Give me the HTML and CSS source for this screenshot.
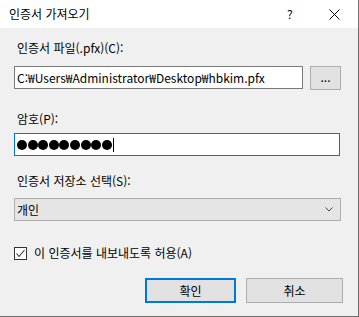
FILE: index.html
```html
<!DOCTYPE html>
<html lang="ko">
<head>
  <meta charset="UTF-8" />
  <title>인증서 가져오기</title>
  <link rel="stylesheet" href="styles.css">
</head>
<body>
  <div class="dialog">
    <!-- 제목 표시줄 -->
    <div class="titlebar">
      <span class="title">인증서 가져오기</span>
      <span class="help">?</span>
      <span class="close">
        <svg width="11" height="11" viewBox="0 0 11 11"><path d="M0.5 0.5 L10.5 10.5 M10.5 0.5 L0.5 10.5" stroke="#000" stroke-width="1" fill="none"/></svg>
      </span>
    </div>

    <div class="content">
      <div class="label first">인증서 파일(.pfx)(C):</div>
      <div class="file-row">
        <div class="field path">C:₩Users₩Administrator₩Desktop₩hbkim.pfx</div>
        <div class="browse">...</div>
      </div>

      <div class="label pw-label">암호(P):</div>
      <div class="field password">
        <span class="dot"></span><span class="dot"></span><span class="dot"></span>
        <span class="dot"></span><span class="dot"></span><span class="dot"></span>
        <span class="dot"></span><span class="dot"></span><span class="dot"></span>
        <span class="caret"></span>
      </div>

      <div class="label store-label">인증서 저장소 선택(S):</div>
      <div class="select">
        <span>개인</span>
        <svg width="8" height="5" viewBox="0 0 8 5"><path d="M0.5 0.5 L4 4 L7.5 0.5" stroke="#444" stroke-width="1" fill="none"/></svg>
      </div>

      <div class="check-row">
        <span class="checkbox">
          <svg width="11" height="11" viewBox="0 0 11 11"><path d="M1.5 5.5 L4 8.5 L9.5 2" stroke="#333" stroke-width="1.1" fill="none"/></svg>
        </span>
        <span>이 인증서를 내보내도록 허용(A)</span>
      </div>

      <div class="buttons">
        <div class="btn ok">확인</div>
        <div class="btn cancel">취소</div>
      </div>
    </div>
  </div>
</body>
</html>
```

FILE: styles.css
```css
body {
  margin: 0;
  font-family: "Noto Sans CJK KR", "Noto Sans", sans-serif;
  font-size: 12px;
  color: #000;
  background: #fff;
}
.dialog {
  width: 358px;
  height: 316px;
  background: #f0f0f0;
  border-right: 1px solid #6e6e6e;
  border-bottom: 1px solid #6e6e6e;
}
.titlebar {
  height: 28px;
  background: #fff;
  display: flex;
  align-items: center;
}
.title {
  margin-left: 9px;
  line-height: 16px;
}
.help {
  margin-left: auto;
  width: 12px;
  line-height: 16px;
}
.close {
  margin-left: 30px;
  margin-right: 18px;
  display: flex;
}
.content {
  padding-left: 14px;
}
.label {
  line-height: 16px;
  padding-left: 3px;
}
.label.first {
  margin-top: 12px;
}
.file-row {
  display: flex;
  margin-top: 10px;
}
.field {
  box-sizing: border-box;
  height: 23px;
  background: #fff;
  border: 1px solid #7a7a7a;
  line-height: 21px;
  padding-left: 2px;
}
.path {
  width: 289px;
}
.browse {
  box-sizing: border-box;
  width: 31px;
  height: 24px;
  margin-left: 7px;
  background: #e1e1e1;
  border: 1px solid #adadad;
  text-align: center;
  line-height: 20px;
}
.pw-label {
  margin-top: 21px;
}
.password {
  width: 326px;
  margin-top: 6px;
  border-color: #0078d7;
  display: flex;
  align-items: center;
  gap: 0.6px;
}
.dot {
  width: 10px;
  height: 10px;
  border-radius: 50%;
  background: #000;
}
.caret {
  width: 1px;
  height: 14px;
  background: #000;
  margin-left: 1px;
}
.store-label {
  margin-top: 17px;
}
.select {
  box-sizing: border-box;
  width: 327px;
  height: 23px;
  margin-top: 9px;
  background: #e5e5e5;
  border: 1px solid #adadad;
  display: flex;
  align-items: center;
  justify-content: space-between;
  padding: 0 7px 0 2px;
}
.check-row {
  display: flex;
  align-items: center;
  margin-top: 24px;
  line-height: 16px;
}
.checkbox {
  box-sizing: border-box;
  width: 13px;
  height: 13px;
  border: 1px solid #333;
  background: #fff;
  display: flex;
  margin-right: 7px;
}
.buttons {
  display: flex;
  margin-top: 17px;
  padding-left: 131px;
  gap: 10px;
}
.btn {
  box-sizing: border-box;
  height: 25px;
  background: #e1e1e1;
  border: 1px solid #adadad;
  text-align: center;
  line-height: 23px;
}
.ok {
  width: 91px;
  border: 2px solid #0078d7;
  line-height: 21px;
}
.cancel {
  width: 97px;
}
```
